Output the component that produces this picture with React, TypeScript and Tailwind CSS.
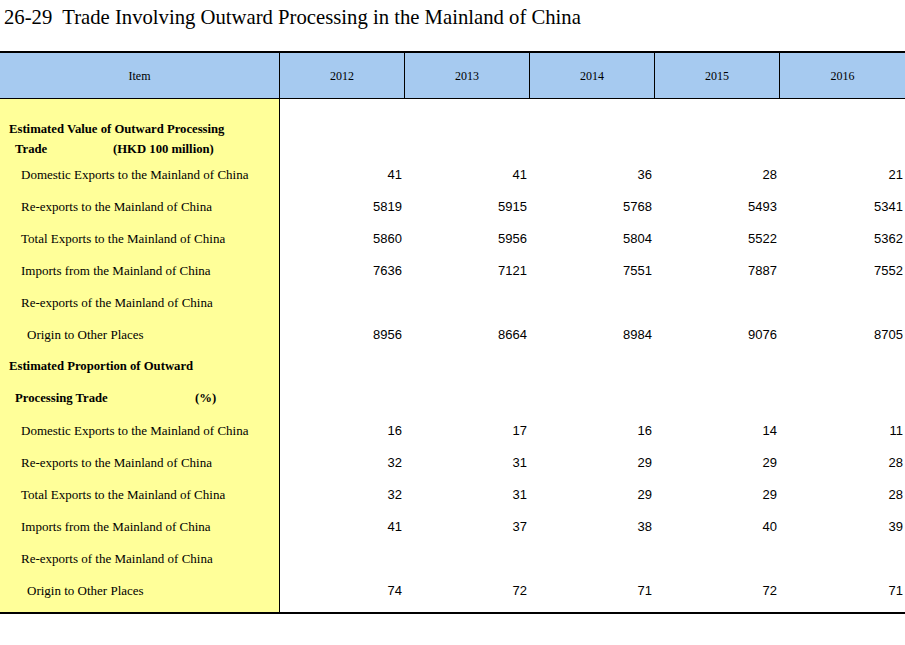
import React from "react";

const serif = { fontFamily: '"Liberation Serif", "Times New Roman", serif' };

type Row = {
  label: React.ReactNode;
  indent: string;
  bold?: boolean;
  values?: string[];
};

const rows: Row[] = [
  { label: "Domestic Exports to the Mainland of China", indent: "pl-[21px]", values: ["41", "41", "36", "28", "21"] },
  { label: "Re-exports to the Mainland of China", indent: "pl-[21px]", values: ["5819", "5915", "5768", "5493", "5341"] },
  { label: "Total Exports to the Mainland of China", indent: "pl-[21px]", values: ["5860", "5956", "5804", "5522", "5362"] },
  { label: "Imports from the Mainland of China", indent: "pl-[21px]", values: ["7636", "7121", "7551", "7887", "7552"] },
  { label: "Re-exports of the Mainland of China", indent: "pl-[21px]" },
  { label: "Origin to Other Places", indent: "pl-[27px]", values: ["8956", "8664", "8984", "9076", "8705"] },
  { label: "Estimated Proportion of Outward", indent: "pl-[9px]", bold: true },
  {
    label: (
      <span className="flex">
        <span className="w-[180px]">Processing Trade</span>
        <span>(%)</span>
      </span>
    ),
    indent: "pl-[15px]",
    bold: true,
  },
  { label: "Domestic Exports to the Mainland of China", indent: "pl-[21px]", values: ["16", "17", "16", "14", "11"] },
  { label: "Re-exports to the Mainland of China", indent: "pl-[21px]", values: ["32", "31", "29", "29", "28"] },
  { label: "Total Exports to the Mainland of China", indent: "pl-[21px]", values: ["32", "31", "29", "29", "28"] },
  { label: "Imports from the Mainland of China", indent: "pl-[21px]", values: ["41", "37", "38", "40", "39"] },
  { label: "Re-exports of the Mainland of China", indent: "pl-[21px]" },
  { label: "Origin to Other Places", indent: "pl-[27px]", values: ["74", "72", "71", "72", "71"] },
];

const years = ["2012", "2013", "2014", "2015", "2016"];
const colW = ["w-[125px]", "w-[125px]", "w-[125px]", "w-[125px]", "w-[126px]"];

export default function App() {
  return (
    <div className="w-[905px] h-[645px] bg-white text-black overflow-hidden">
      <div className="h-[51px] pl-[4px] pt-[5px] text-[20.7px] leading-[24px] whitespace-pre" style={serif}>
        26-29  Trade Involving Outward Processing in the Mainland of China
      </div>
      <div className="border-t-2 border-b-2 border-black">
        {/* header */}
        <div className="flex h-[46px] bg-[#a6caf0] border-b border-black text-[12px]" style={serif}>
          <div className="w-[279px] flex items-center justify-center">Item</div>
          {years.map((y, i) => (
            <div key={y} className={`${colW[i]} border-l border-black flex items-center justify-center`}>
              {y}
            </div>
          ))}
        </div>
        {/* body */}
        <div className="flex">
          <div className="w-[280px] bg-[#ffff99] border-r border-black pb-[5px]" style={serif}>
            <div className="pt-[20px] text-[12.7px] font-bold leading-[20px]">
              <div className="pl-[9px]">Estimated Value of Outward Processing</div>
              <div className="pl-[15px] flex">
                <span className="w-[98px]">Trade</span>
                <span>(HKD 100 million)</span>
              </div>
            </div>
            {rows.map((r, i) => (
              <div
                key={i}
                className={`h-[32px] flex items-center ${r.indent} ${r.bold ? "font-bold text-[12.7px]" : "text-[13px]"}`}
              >
                {r.label}
              </div>
            ))}
          </div>
          <div className="flex-1 pt-[60px]" style={{ fontFamily: '"Liberation Sans", Arial, sans-serif' }}>
            {rows.map((r, i) => (
              <div key={i} className="h-[32px] flex items-center text-[13px]">
                {years.map((y, j) => (
                  <div key={y} className={`${j === 0 ? "w-[124px]" : colW[j]} text-right pr-[2px]`}>
                    {r.values ? r.values[j] : ""}
                  </div>
                ))}
              </div>
            ))}
          </div>
        </div>
      </div>
    </div>
  );
}
